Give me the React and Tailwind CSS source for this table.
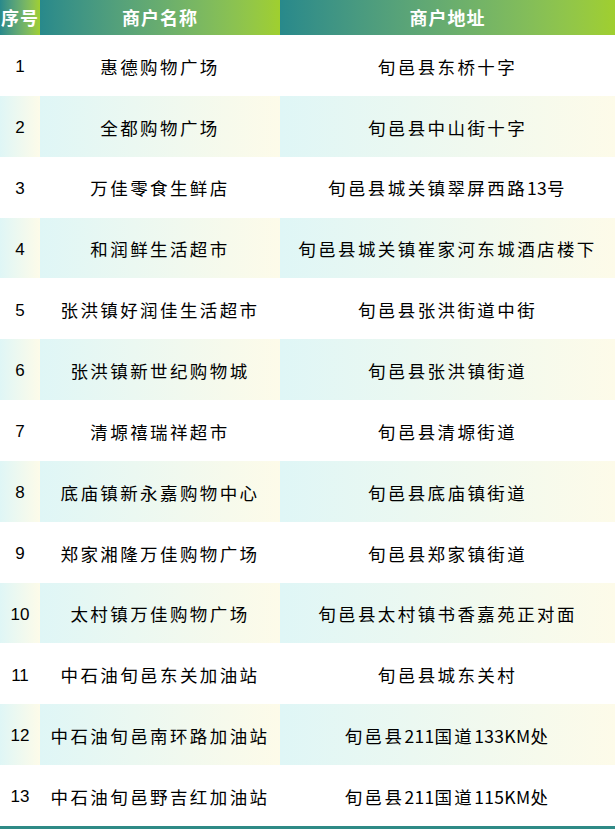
import React from "react";

const rows = [
  ["1", "惠德购物广场", "旬邑县东桥十字"],
  ["2", "全都购物广场", "旬邑县中山街十字"],
  ["3", "万佳零食生鲜店", "旬邑县城关镇翠屏西路13号"],
  ["4", "和润鲜生活超市", "旬邑县城关镇崔家河东城酒店楼下"],
  ["5", "张洪镇好润佳生活超市", "旬邑县张洪街道中街"],
  ["6", "张洪镇新世纪购物城", "旬邑县张洪镇街道"],
  ["7", "清塬禧瑞祥超市", "旬邑县清塬街道"],
  ["8", "底庙镇新永嘉购物中心", "旬邑县底庙镇街道"],
  ["9", "郑家湘隆万佳购物广场", "旬邑县郑家镇街道"],
  ["10", "太村镇万佳购物广场", "旬邑县太村镇书香嘉苑正对面"],
  ["11", "中石油旬邑东关加油站", "旬邑县城东关村"],
  ["12", "中石油旬邑南环路加油站", "旬邑县211国道133KM处"],
  ["13", "中石油旬邑野吉红加油站", "旬邑县211国道115KM处"],
];

const head = "flex items-center justify-center bg-linear-to-r from-[#28898b] to-[#a0cf2e] text-white font-bold text-[18px] tracking-[1px]";

// ascii runs get tighter spacing, like the half-width digits in the picture
const Text = ({ s }) =>
  s.split(/([0-9A-Z]+)/).map((p, i) =>
    /^[0-9A-Z]+$/.test(p) ? (
      <span key={i} className="tracking-[0.3px]">{p}</span>
    ) : (
      <span key={i}>{p}</span>
    )
  );

const App = () => {
  return (
    <div
      className="w-[615px] h-[829px] bg-white overflow-hidden"
      style={{ fontFamily: '"Noto Sans CJK SC", "Noto Sans", sans-serif' }}
    >
      <div className="grid grid-cols-[40px_240px_335px] h-[35px]">
        <div className={head}>序号</div>
        <div className={head}>商户名称</div>
        <div className={head}>商户地址</div>
      </div>
      {rows.map((r, i) => {
        const cell =
          "flex items-center justify-center pt-[3px] " +
          (i % 2 === 1 ? "bg-linear-to-r from-[#dff6f6] to-[#fdfbe9]" : "bg-white");
        return (
          <div key={r[0]} className="grid grid-cols-[40px_240px_335px] h-[60.85px] text-black text-[17.5px] font-normal tracking-[2.4px]">
            <div className={cell} style={{ fontFamily: '"Liberation Sans", sans-serif', letterSpacing: 0, fontSize: 17 }}>{r[0]}</div>
            <div className={cell}><Text s={r[1]} /></div>
            <div className={cell}><Text s={r[2]} /></div>
          </div>
        );
      })}
      <div className="h-[3px] bg-[#2e8a86]"></div>
    </div>
  );
};

export default App;
